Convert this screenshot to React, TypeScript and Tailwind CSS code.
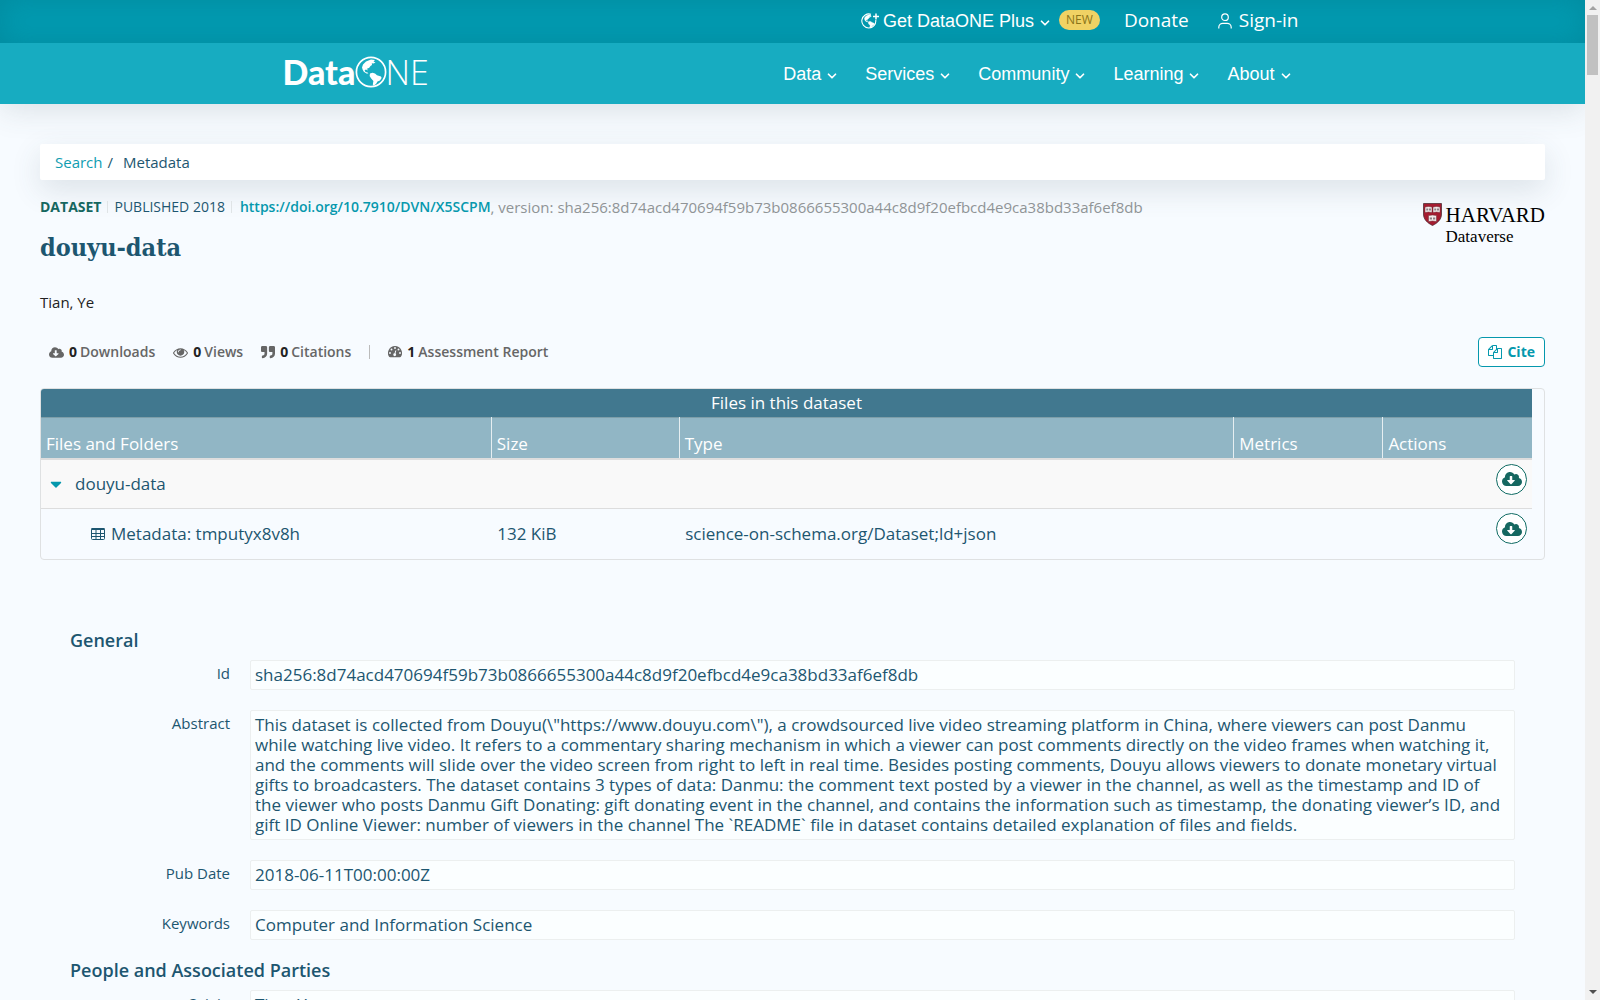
import type { ReactNode } from "react";
import { FaCloudDownloadAlt, FaQuoteRight, FaCaretDown } from "react-icons/fa";
import { ChevronDown } from "lucide-react";

const ABSTRACT =
  'This dataset is collected from Douyu(\\"https://www.douyu.com\\"), a crowdsourced live video streaming platform in China, where viewers can post Danmu while watching live video. It refers to a commentary sharing mechanism in which a viewer can post comments directly on the video frames when watching it, and the comments will slide over the video screen from right to left in real time. Besides posting comments, Douyu allows viewers to donate monetary virtual gifts to broadcasters. The dataset contains 3 types of data: Danmu: the comment text posted by a viewer in the channel, as well as the timestamp and ID of the viewer who posts Danmu Gift Donating: gift donating event in the channel, and contains the information such as timestamp, the donating viewer’s ID, and gift ID Online Viewer: number of viewers in the channel The `README` file in dataset contains detailed explanation of files and fields.';

const HASH = "sha256:8d74acd470694f59b73b0866655300a44c8d9f20efbcd4e9ca38bd33af6ef8db";

/* Continents of the western hemisphere, drawn on a 32 unit globe. */
function Land() {
  return (
    <g fill="currentColor">
      <path d="M8 8.5 11 5.5 16 3.5 20 4 18.5 5.5 20.5 6.5 18.5 7.5 16.8 7.2 17 9 15.5 10 14 12 12.2 12.5 12.6 14.6 11 13.4 9.6 14.2 10.5 16 12.6 16.6 13.4 17.6 11.5 17.4 8.8 15.8 7.6 13.5 7 11.5Z" />
      <path d="M15 17.5 17.5 16.8 20 17.6 22 19.2 26 20.6 26.6 22 25 24.5 22.5 25.5 21 28 18.6 29.8 17.8 28.5 18.4 25 16.2 22.6 14.6 20Z" />
    </g>
  );
}

function GlobePlus() {
  return (
    <svg viewBox="0 0 36 32" className="h-4 w-[18px]" fill="none" stroke="currentColor" aria-hidden="true">
      <path d="M20 2.6A14 14 0 1 0 29.5 14" strokeWidth="2.2" />
      <path d="M30 1v12M24 7h12" strokeWidth="3" />
      <g stroke="currentColor" strokeWidth="1"><Land /></g>
    </svg>
  );
}

function Person() {
  return (
    <svg viewBox="0 0 16 16" className="size-4" fill="none" stroke="currentColor" strokeWidth="1.2" aria-hidden="true">
      <circle cx="8" cy="4.2" r="3.3" />
      <path d="M1.8 15.5v-1.2A4 4 0 0 1 5.8 10.4h4.4a4 4 0 0 1 4 3.9v1.2" />
    </svg>
  );
}

function Glyph({ d, className }: { d: string; className: string }) {
  return (
    <svg viewBox="0 0 1792 1792" className={className} fill="currentColor" aria-hidden="true">
      <path d={d} />
    </svg>
  );
}

const EYE =
  "M1664 960q-152-236-381-353 61 104 61 225 0 185-131.5 316.5t-316.5 131.5-316.5-131.5-131.5-316.5q0-121 61-225-229 117-381 353 133 205 333.5 326.5t434.5 121.5 434.5-121.5 333.5-326.5zm-720-384q0-20-14-34t-34-14q-125 0-214.5 89.5t-89.5 214.5q0 20 14 34t34 14 34-14 14-34q0-86 61-147t147-61q20 0 34-14t14-34zm848 384q0 34-20 69-140 230-376.5 368.5t-499.5 138.5-499.5-139-376.5-368q-20-35-20-69t20-69q140-229 376.5-368t499.5-139 499.5 139 376.5 368q20 35 20 69z";
const COPY =
  "M1696 384q40 0 68 28t28 68v1216q0 40-28 68t-68 28h-960q-40 0-68-28t-28-68v-288h-544q-40 0-68-28t-28-68v-672q0-40 20-88t48-76l408-408q28-28 76-48t88-20h416q40 0 68 28t28 68v328q68-40 128-40h416zm-544 213l-299 299h299v-299zm-640-384l-299 299h299v-299zm196 647l316-316v-416h-384v416q0 40-28 68t-68 28h-416v640h512v-256q0-40 20-88t48-76zm956 804v-1152h-384v416q0 40-28 68t-68 28h-416v640h896z";

function Gauge() {
  return (
    <svg viewBox="0 0 28 24" className="h-3 w-[14px]" aria-hidden="true">
      <path fill="currentColor" d="M14 0A14 14 0 0 0 2.2 21.6Q2.8 22.5 4 22.5H24Q25.2 22.5 25.8 21.6A14 14 0 0 0 14 0Z" />
      <g fill="#f7fbff">
        <circle cx="4" cy="14" r="1.9" /><circle cx="7" cy="7" r="1.9" /><circle cx="14" cy="4" r="1.9" />
        <circle cx="21" cy="7" r="1.9" /><circle cx="24" cy="14" r="1.9" />
        <circle cx="13.4" cy="17.5" r="2.8" />
      </g>
      <path d="M13.4 17.5 15.6 9" stroke="#f7fbff" strokeWidth="2" />
    </svg>
  );
}

function TableIcon() {
  return (
    <svg viewBox="0 0 14 12" className="h-3 w-[14px]" fill="none" stroke="currentColor" strokeWidth="1" aria-hidden="true">
      <rect x="0.5" y="0.5" width="13" height="11" rx="1" />
      <path d="M0.5 1h13" strokeWidth="2" />
      <path d="M0 5.5h14M0 8.5h14M5 1v11M9.5 1v11" />
    </svg>
  );
}

function Shield() {
  return (
    <svg viewBox="0 0 38 46" className="h-[23px] w-[19px]" aria-hidden="true">
      <path d="M1 1H37V22C37 33 29 40 19 45 9 40 1 33 1 22Z" fill="#a51c30" stroke="#4a2a30" strokeWidth="1.5" />
      <g fill="#f5ecec" stroke="#6b2a35" strokeWidth="1">
        <path d="M4 8 11 7 18 8V19L11 18 4 19Z" /><path d="M20 8 27 7 34 8V19L27 18 20 19Z" /><path d="M11 25 19 24 27 25V37L19 36 11 37Z" />
      </g>
      <path d="M6.5 13h4M12 13h4M22.5 13h4M28 13h4M13.5 31h4.5M20 31h4.5" stroke="#8b8084" strokeWidth="4" />
    </svg>
  );
}

function Logo() {
  return (
    <a href="#home" aria-label="DataONE" className="flex items-center pb-1 leading-none text-white">
      <span className="font-['Lato',sans-serif] text-[34px] font-black">Data</span>
      <svg viewBox="0 0 32 32" className="size-8" aria-hidden="true">
        <circle cx="16" cy="16" r="14.6" fill="none" stroke="currentColor" strokeWidth="1.7" />
        <Land />
      </svg>
      <span className="-ml-0.5 font-['Open_Sans',sans-serif] text-[34px] font-light">NE</span>
    </a>
  );
}

const NAV = ["Data", "Services", "Community", "Learning", "About"];

function Stat({ icon, n, label }: { icon: ReactNode; n: number; label: string }) {
  return (
    <a href={"#" + label} className="flex items-center gap-[3px] text-[#666]">
      {icon}
      <span className="ml-0.5 font-bold text-[#222]">{n}</span>
      <span>{label}</span>
    </a>
  );
}

function Download() {
  return (
    <button aria-label="Download" className="mt-1 mr-[5px] ml-auto flex size-[31px] items-center justify-center rounded-full border border-[#0f6b63] bg-white text-[#156760]">
      <FaCloudDownloadAlt className="size-5" />
    </button>
  );
}

function Field({ label, children }: { label: string; children: ReactNode }) {
  return (
    <div className="flex gap-5">
      <dt className="w-[160px] shrink-0 pt-[3px] text-right text-[15px] leading-5">{label}</dt>
      <dd className="min-w-0 flex-1 rounded-xs border border-[#ecefef] bg-[#fbfeff] py-1 pr-3 pl-1 text-[17px] leading-5">{children}</dd>
    </div>
  );
}

function Section({ title, children }: { title: string; children: ReactNode }) {
  return (
    <section className="pb-[15px]">
      <h2 className="mb-[5px] text-lg leading-[30px] font-semibold">{title}</h2>
      <dl className="flex flex-col gap-5">{children}</dl>
    </section>
  );
}

export default function App() {
  return (
    <div className="flex h-screen bg-[#f7fbff] font-['Open_Sans',sans-serif] text-[#1d5670]">
      <div className="min-w-0 flex-1 overflow-x-hidden overflow-y-auto [scrollbar-width:none]">
        <header className="font-['Liberation_Sans',sans-serif] text-lg text-white shadow-[0_5px_30px_rgba(60,80,90,0.16)]">
          <div className="bg-[#029bb1] shadow-[inset_0_0_30px_rgba(0,110,125,0.35)]">
            <div className="mx-auto flex h-[43px] max-w-5xl items-center justify-end pr-[6px] pb-px">
              <button className="flex items-center gap-1">
                <GlobePlus />
                Get DataONE Plus
                <ChevronDown className="mt-1 size-[14px]" strokeWidth={3} />
              </button>
              <span className="mb-0.5 ml-[7px] rounded-full bg-[#f0d264] px-[7px] font-['Open_Sans',sans-serif] text-xs leading-5 text-[#8a7419]">NEW</span>
              <a href="#donate" className="ml-6 font-['Open_Sans',sans-serif] text-[19px]">Donate</a>
              <a href="#signin" className="ml-7 flex items-center gap-[6px] font-['Open_Sans',sans-serif] text-[19px]">
                <Person />
                Sign-in
              </a>
            </div>
          </div>
          <div className="bg-[#17acc1]">
            <div className="mx-auto flex h-[61px] max-w-5xl items-center justify-between pr-3 pl-0.5">
              <Logo />
              <nav className="flex gap-[26px]">
                {NAV.map((n) => (
                  <button key={n} className="flex items-center gap-1">
                    {n}
                    <ChevronDown className="mt-1 size-[14px]" strokeWidth={3} />
                  </button>
                ))}
              </nav>
            </div>
          </div>
        </header>

        <main className="px-10 pt-10">
          <nav aria-label="Breadcrumb" className="flex h-9 items-center gap-[5px] rounded-xs bg-white px-[15px] text-[15px] shadow-[0_10px_30px_rgba(60,80,90,0.14)]">
            <a href="#search" className="text-[#0f9db1]">Search</a>
            <span>/</span>
            <span className="ml-[5px]">Metadata</span>
          </nav>

          <div className="flex items-start justify-between pt-[17px]">
            <div>
              <div className="flex h-5 items-center text-[15px]">
                <span className="border-r border-[#dfe4e6] pr-[6px] text-sm leading-3 font-bold text-[#156760]">DATASET</span>
                <span className="border-r border-[#dfe4e6] px-[6px] text-sm leading-3">PUBLISHED 2018</span>
                <a href="#doi" className="ml-2 text-sm font-semibold text-[#0598ad]">https://doi.org/10.7910/DVN/X5SCPM</a>
                <span className="text-[#8f9496]">, version: {HASH}</span>
              </div>
              <h1 className="mt-[13px] font-['DejaVu_Serif_Condensed','DejaVu_Serif',serif] text-[25px] leading-9 font-bold">douyu-data</h1>
              <p className="mt-[26px] text-[15px] leading-5 text-[#222]">Tian, Ye</p>
            </div>
            <a href="#harvard" className="mt-[6px] flex items-start gap-1 font-['Liberation_Serif',serif] text-black">
              <Shield />
              <span className="flex flex-col">
                <span className="text-[21px] leading-6">HARVARD</span>
                <span className="text-[17px] leading-5">Dataverse</span>
              </span>
            </a>
          </div>

          <div className="mt-[25px] flex h-[30px] items-center justify-between">
            <div className="flex items-center gap-[18px] pl-[9px] text-sm font-semibold">
              <Stat icon={<FaCloudDownloadAlt className="size-[15px]" />} n={0} label="Downloads" />
              <Stat icon={<Glyph d={EYE} className="size-[15px]" />} n={0} label="Views" />
              <Stat icon={<FaQuoteRight className="size-[14px]" />} n={0} label="Citations" />
              <span className="h-[14px] w-px bg-[#bbb]" />
              <Stat icon={<Gauge />} n={1} label="Assessment Report" />
            </div>
            <button className="flex h-[30px] items-center gap-[5px] rounded-sm border border-[#0598ad] bg-white px-[9px] text-sm font-bold text-[#0598ad]">
              <Glyph d={COPY} className="size-[14px]" />
              Cite
            </button>
          </div>

          <div className="mt-[21px] overflow-hidden rounded-sm border border-[#dfe1e2] pr-3">
            <table className="w-full table-fixed border-collapse text-left text-[17px] leading-5">
              <caption className="bg-[#41788f] text-center leading-7 text-white">Files in this dataset</caption>
              <colgroup>
                <col className="w-[30.2%]" />
                <col className="w-[12.6%]" />
                <col className="w-[37.2%]" />
                <col className="w-[10%]" />
                <col className="w-[10%]" />
              </colgroup>
              <thead className="border-b-2 border-[#ddd] bg-[#91b6c5] text-white">
                <tr className="h-[41px] border-t border-[#7d9ea9] align-bottom">
                  {["Files and Folders", "Size", "Type", "Metrics", "Actions"].map((h) => (
                    <th key={h} className="border-l border-[#e6eef1] px-[5px] pb-1 font-normal first:border-l-0">{h}</th>
                  ))}
                </tr>
              </thead>
              <tbody>
                <tr className="h-[50px] border-b border-[#ddd] bg-[#f9f9f9]">
                  <td colSpan={4}>
                    <button className="flex items-center gap-[10px] pl-[6px]">
                      <FaCaretDown className="size-[18px] text-[#0598ad]" />
                      douyu-data
                    </button>
                  </td>
                  <td className="align-top"><Download /></td>
                </tr>
                <tr className="h-[50px]">
                  <td>
                    <span className="flex items-center gap-[6px] pl-[50px]"><TableIcon />Metadata: tmputyx8v8h</span>
                  </td>
                  <td className="px-[6px]">132 KiB</td>
                  <td className="px-[6px]">science-on-schema.org/Dataset;ld+json</td>
                  <td />
                  <td className="align-top"><Download /></td>
                </tr>
              </tbody>
            </table>
          </div>

          <div className="px-[30px] pt-[65px]">
            <Section title="General">
              <Field label="Id">{HASH}</Field>
              <Field label="Abstract">{ABSTRACT}</Field>
              <Field label="Pub Date">2018-06-11T00:00:00Z</Field>
              <Field label="Keywords">Computer and Information Science</Field>
            </Section>
            <Section title="People and Associated Parties">
              <Field label="Origin">Tian, Ye</Field>
            </Section>
          </div>
        </main>
      </div>

      <div className="flex w-[15px] shrink-0 flex-col items-center justify-between bg-[#f1f1f1] pt-[6px] pb-[6px]" aria-hidden="true">
        <div className="flex flex-col items-center gap-[5px]">
          <svg viewBox="0 0 8 4" className="h-1 w-2"><path d="M0 4 4 0 8 4Z" fill="#a3a3a3" /></svg>
          <div className="h-[60px] w-[11px] bg-[#c1c1c1]" />
        </div>
        <svg viewBox="0 0 8 4" className="h-1 w-2"><path d="M0 0 4 4 8 0Z" fill="#505050" /></svg>
      </div>
    </div>
  );
}
